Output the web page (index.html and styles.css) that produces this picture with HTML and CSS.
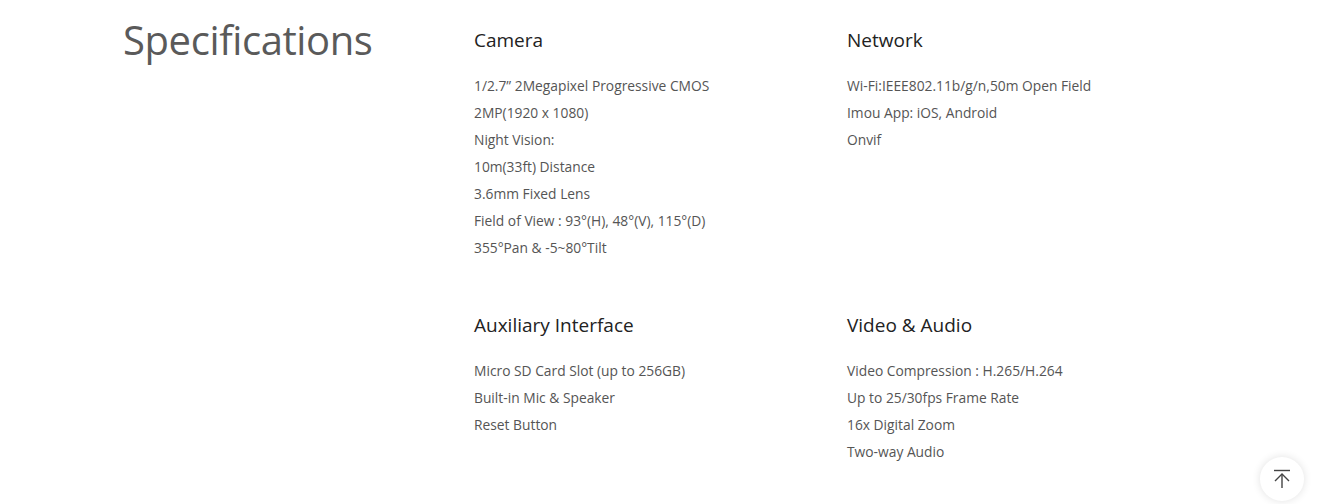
FILE: index.html
```html
<!DOCTYPE html>
<html lang="en">
<head>
    <meta charset="UTF-8">
    <meta name="viewport" content="width=device-width, initial-scale=1.0">
    <title>Specifications</title>
    <link rel="stylesheet" href="styles.css">
</head>
<body>
    <section class="specs">
        <h2 class="specs-title">Specifications</h2>
        <div class="specs-grid">
            <div class="spec-group">
                <h3>Camera</h3>
                <ul>
                    <li>1/2.7” 2Megapixel Progressive CMOS</li>
                    <li>2MP(1920 x 1080)</li>
                    <li>Night Vision:</li>
                    <li>10m(33ft) Distance</li>
                    <li>3.6mm Fixed Lens</li>
                    <li>Field of View : 93°(H), 48°(V), 115°(D)</li>
                    <li>355°Pan &amp; -5~80°Tilt</li>
                </ul>
            </div>
            <div class="spec-group">
                <h3>Network</h3>
                <ul>
                    <li>Wi-Fi:IEEE802.11b/g/n,50m Open Field</li>
                    <li>Imou App: iOS, Android</li>
                    <li>Onvif</li>
                </ul>
            </div>
            <div class="spec-group">
                <h3>Auxiliary Interface</h3>
                <ul>
                    <li>Micro SD Card Slot (up to 256GB)</li>
                    <li>Built-in Mic &amp; Speaker</li>
                    <li>Reset Button</li>
                </ul>
            </div>
            <div class="spec-group">
                <h3>Video &amp; Audio</h3>
                <ul>
                    <li>Video Compression : H.265/H.264</li>
                    <li>Up to 25/30fps Frame Rate</li>
                    <li>16x Digital Zoom</li>
                    <li>Two-way Audio</li>
                </ul>
            </div>
        </div>
    </section>

    <button class="back-top" title="Back to top">
        <svg width="22" height="22" viewBox="0 0 22 22" fill="none" stroke="#444" stroke-width="1.4">
            <path d="M3 2.5h16"/>
            <path d="M11 6v14"/>
            <path d="M4 13l7-7 7 7"/>
        </svg>
    </button>
</body>
</html>
```

FILE: styles.css
```css
body {
    margin: 0;
    font-family: "Open Sans", "Noto Sans", Arial, sans-serif;
    background: #fff;
    color: #555;
    overflow: hidden;
}
.specs {
    display: flex;
    padding: 14px 0 0 123px;
}
.specs-title {
    width: 351px;
    margin: 0;
    font-size: 40px;
    font-weight: 400;
    letter-spacing: -0.4px;
    line-height: 52px;
    color: #5a5a5a;
}
.specs-grid {
    display: grid;
    grid-template-columns: 373px 373px;
    row-gap: 50px;
    padding-top: 12px;
}
.spec-group h3 {
    margin: 0 0 18px;
    font-size: 19px;
    font-weight: 400;
    line-height: 28px;
    color: #222;
}
.spec-group ul {
    list-style: none;
    margin: 0;
    padding: 0;
}
.spec-group li {
    font-size: 13.8px;
    line-height: 27px;
    color: #555;
}
.back-top {
    position: fixed;
    right: 40px;
    bottom: 3px;
    width: 44px;
    height: 44px;
    border: none;
    border-radius: 50%;
    background: #fff;
    box-shadow: 0 0 8px rgba(0, 0, 0, 0.12);
    display: flex;
    align-items: center;
    justify-content: center;
    padding: 0;
    cursor: pointer;
}
```
